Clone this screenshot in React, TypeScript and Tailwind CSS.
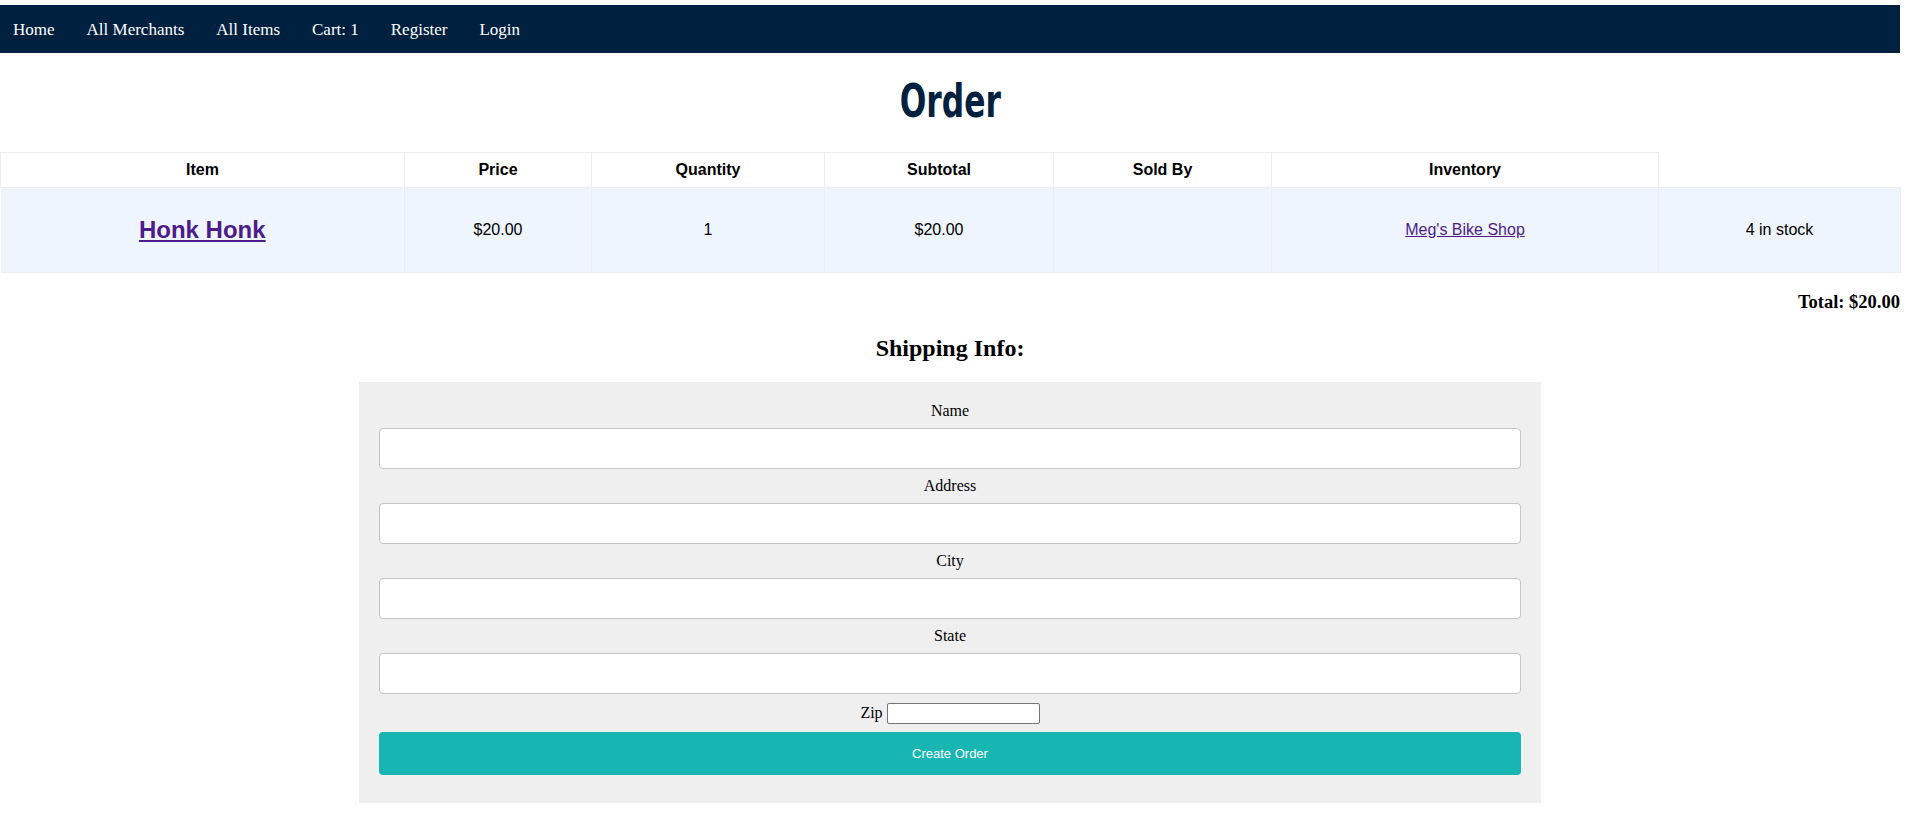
const links = ["Home", "All Merchants", "All Items", "Cart: 1", "Register", "Login"];
const headers = ["Item", "Price", "Quantity", "Subtotal", "Sold By", "Inventory"];
const widths = ["w-[404px]", "w-[187px]", "w-[233px]", "w-[229px]", "w-[218px]", "w-[387px]", "w-[242px]"];
const fields = ["Name", "Address", "City", "State"];

const serif = "font-['Liberation_Serif',serif]";
const sans = "font-['Liberation_Sans',Arial,sans-serif]";

export default function App() {
  return (
    <div className="w-[1900px] bg-white pt-[5px] text-black">
      {/* Nav */}
      <nav className={`flex h-[48px] items-center gap-[32px] bg-[#00203f] pl-[13px] text-[17px] text-white ${serif}`}>
        {links.map((l) => (
          <a key={l} href="#" className="leading-none">
            {l}
          </a>
        ))}
      </nav>

      {/* Title */}
      <h1 className="flex h-[99px] items-center justify-center pb-[4px] font-['DejaVu_Sans_Condensed','DejaVu_Sans',sans-serif] text-[47px] font-bold leading-none text-[#00203f] font-stretch-condensed">
        <span className="inline-block scale-x-[0.74]">Order</span>
      </h1>

      {/* Cart table */}
      <table className={`w-[1900px] table-fixed border-collapse text-[16px] ${sans}`}>
        <colgroup>
          {widths.map((w, i) => (
            <col key={i} className={w} />
          ))}
        </colgroup>
        <thead>
          <tr className="h-[35px]">
            {headers.map((h) => (
              <th key={h} className="border border-[#eeeeee] p-0 text-center font-bold">
                {h}
              </th>
            ))}
            <th className="p-0" />
          </tr>
        </thead>
        <tbody>
          <tr className="h-[85px] bg-[#eef5fe]">
            <td className="border border-[#e9eef3] border-l-0 p-0 text-center">
              <a href="#" className="text-[24px] font-bold text-[#4d1c8a] underline">
                Honk Honk
              </a>
            </td>
            <td className="border border-[#e9eef3] p-0 text-center">$20.00</td>
            <td className="border border-[#e9eef3] p-0 text-center">1</td>
            <td className="border border-[#e9eef3] p-0 text-center">$20.00</td>
            <td className="border border-[#e9eef3] p-0 text-center"></td>
            <td className="border border-[#e9eef3] p-0 text-center">
              <a href="#" className="text-[#4d1c8a] underline">
                Meg's Bike Shop
              </a>
            </td>
            <td className="border border-[#e9eef3] p-0 text-center">4 in stock</td>
          </tr>
        </tbody>
      </table>

      {/* Total */}
      <h3 className={`mt-[19px] text-right text-[18.5px] font-bold leading-[21px] ${serif}`}>Total: $20.00</h3>

      {/* Shipping */}
      <h2 className={`mt-[21px] text-center text-[24px] font-bold leading-[28px] ${serif}`}>Shipping Info:</h2>

      <form className={`mx-auto mt-[20px] w-[1182px] bg-[#efefef] p-5 text-[16px] ${serif}`}>
        {fields.map((f) => (
          <div key={f}>
            <label className="block text-center leading-[18px]">{f}</label>
            <input
              type="text"
              className="my-2 block h-[41px] w-full rounded border border-[#c4c4c4] bg-white px-2"
            />
          </div>
        ))}
        <div className="flex h-[22px] items-center justify-center gap-[4px]">
          <label className="leading-[18px]">Zip</label>
          <input type="text" className="h-[21px] w-[153px] rounded-[2px] border border-[#767676] bg-white" />
        </div>
        <button
          type="button"
          className={`my-2 block h-[43px] w-full rounded bg-[#17b6b3] text-[13px] text-white ${sans}`}
        >
          Create Order
        </button>
      </form>
      <div className="h-[19px]" />
    </div>
  );
}
